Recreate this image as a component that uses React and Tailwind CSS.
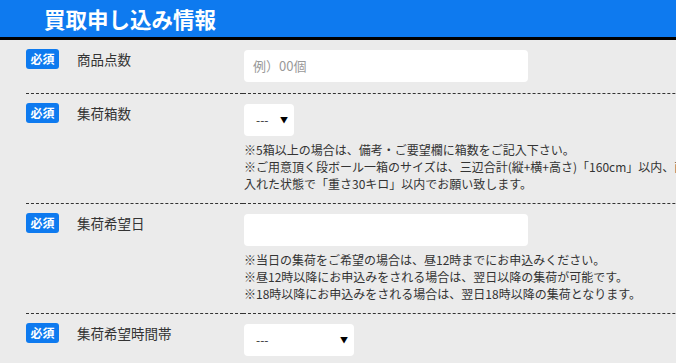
import React from "react";

const font = { fontFamily: '"Noto Sans CJK JP", "Noto Sans", sans-serif' };

function Badge() {
  return (
    <span className="flex h-[20px] w-[33px] shrink-0 items-center justify-center rounded-[3px] bg-[#0e7aef] text-[12px] font-bold leading-none text-white">
      必須
    </span>
  );
}

function Label({ children }) {
  return (
    <div className="flex w-[217px] shrink-0 items-start border-b border-dashed border-[#333] pb-[11px] pt-[9px]">
      <div className="flex items-center">
        <Badge />
        <span className="ml-[18px] text-[13.5px] leading-[20px] text-[#333]">{children}</span>
      </div>
    </div>
  );
}

function Value({ children }) {
  return (
    <div className="flex-1 border-b border-dashed border-[#333] pb-[11px] pl-px pt-[10px]">
      {children}
    </div>
  );
}

function Select({ width }) {
  return (
    <div
      className={`flex h-[32px] items-center justify-between rounded-[4px] bg-white pl-[12px] pr-[6px] text-[12px] text-[#333] ${width}`}
    >
      <span className="leading-none">---</span>
      <span className="text-[8px] leading-none text-black">▼</span>
    </div>
  );
}

function Notes({ lines }) {
  return (
    <div className="mt-[5px] text-[12px] leading-[17px] text-[#333]">
      {lines.map((l, i) => (
        <div key={i} className="whitespace-nowrap">
          {l}
        </div>
      ))}
    </div>
  );
}

export default function App() {
  return (
    <div className="min-h-[363px] w-full overflow-hidden bg-[#ebebeb]" style={font}>
      <div className="flex h-[40px] items-center border-b-[3px] border-black bg-[#0e7aef] pl-[44px]">
        <h1 className="text-[21.5px] font-bold leading-none text-white">買取申し込み情報</h1>
      </div>
      <div className="w-[900px] pl-[26px]">
        <div className="flex">
          <Label>商品点数</Label>
          <Value>
            <div className="flex h-[32px] w-[284px] items-center rounded-[4px] bg-white pl-[9px] text-[13px] text-[#999]">
              例）00個
            </div>
          </Value>
        </div>
        <div className="flex">
          <Label>集荷箱数</Label>
          <Value>
            <Select width="w-[50px]" />
            <Notes
              lines={[
                "※5箱以上の場合は、備考・ご要望欄に箱数をご記入下さい。",
                "※ご用意頂く段ボール一箱のサイズは、三辺合計(縦+横+高さ)「160cm」以内、商品を",
                "入れた状態で「重さ30キロ」以内でお願い致します。",
              ]}
            />
          </Value>
        </div>
        <div className="flex">
          <Label>集荷希望日</Label>
          <Value>
            <div className="h-[32px] w-[284px] rounded-[4px] bg-white" />
            <Notes
              lines={[
                "※当日の集荷をご希望の場合は、昼12時までにお申込みください。",
                "※昼12時以降にお申込みをされる場合は、翌日以降の集荷が可能です。",
                "※18時以降にお申込みをされる場合は、翌日18時以降の集荷となります。",
              ]}
            />
          </Value>
        </div>
        <div className="flex">
          <Label>集荷希望時間帯</Label>
          <Value>
            <Select width="w-[110px]" />
          </Value>
        </div>
      </div>
    </div>
  );
}
